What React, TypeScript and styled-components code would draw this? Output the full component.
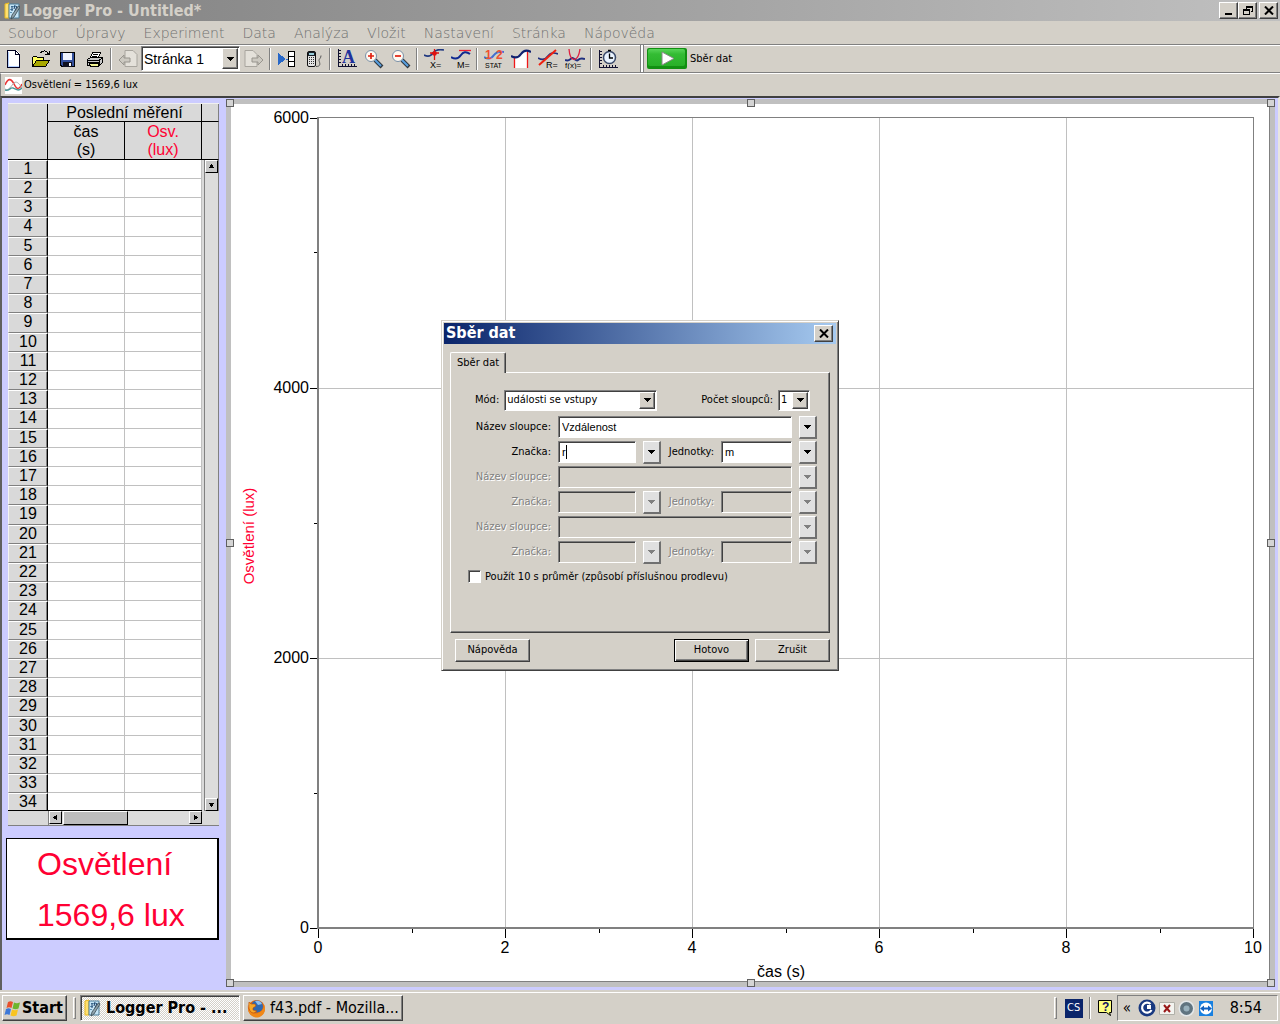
import React from "react";
import styled, { createGlobalStyle, css } from "styled-components";

const face = "#d4d0c8";
const tahoma = '"DejaVu Sans Condensed", "DejaVu Sans", "Noto Sans", sans-serif';
const arial = '"Liberation Sans", Arial, sans-serif';

const GlobalStyle = createGlobalStyle`
  *, *::before, *::after { box-sizing: border-box; }
  body { margin: 0; background: ${face}; font-family: ${tahoma}; color: #000; }
  button, input, select { margin: 0; padding: 0; border-radius: 0; font: inherit; color: inherit; }
`;

const raised = css`
  border: 1px solid;
  border-color: #fff #404040 #404040 #fff;
  box-shadow: inset -1px -1px 0 #808080;
  background: ${face};
`;

const sunken = css`
  border: 1px solid;
  border-color: #808080 #fff #fff #808080;
  box-shadow: inset 1px 1px 0 #404040;
`;

const Page = styled.div`
  display: flex;
  flex-direction: column;
  height: 100vh;
  min-height: 720px;
  overflow: hidden;
`;

const AppWindow = styled.main`
  position: relative;
  display: flex;
  flex: 1;
  flex-direction: column;
  min-height: 0;
`;

/* ---------- title bar, menu, toolbar ---------- */

const TitleBar = styled.header`
  display: flex;
  align-items: center;
  height: 21px;
  padding: 0 2px 0 4px;
  gap: 3px;
  background: linear-gradient(to right, #808080, #c0c0c0);
`;

const WindowTitle = styled.h1`
  flex: 1;
  margin: 0;
  font-size: 16px;
  line-height: 20px;
  font-weight: 700;
  color: ${face};
`;

const CaptionButtons = styled.div`
  display: flex;
  gap: ${(p: { $gap?: number }) => p.$gap ?? 0}px;
`;

const CaptionButton = styled.button`
  ${raised}
  display: grid;
  place-items: center;
  width: 19px;
  height: 17px;
`;

const MenuBar = styled.nav`
  display: flex;
  align-items: center;
  height: 23px;
  padding-left: 8px;
  gap: 18px;
`;

const MenuLink = styled.a`
  font-family: "DejaVu Sans Light", "DejaVu Sans", sans-serif;
  font-size: 14px;
  line-height: 20px;
  font-weight: 200;
  color: #707070;
  text-decoration: none;
`;

const ToolBar = styled.div`
  display: flex;
  align-items: center;
  height: 29px;
  border-top: 1px solid #808080;
  border-bottom: 1px solid #808080;
  box-shadow: inset 0 1px 0 #fff;
`;

const ToolButton = styled.button`
  display: grid;
  place-items: center;
  width: 27px;
  height: 26px;
  border: 0;
  background: none;
`;

const Separator = styled.span`
  width: 2px;
  height: 22px;
  margin: 0 2px;
  border-left: 1px solid #808080;
  border-right: 1px solid #fff;
`;

const BandEnd = styled.span`
  width: 4px;
  height: 27px;
  margin: 0 3px 0 19px;
  border: solid #808080;
  border-width: 0 1px;
  background: #fff;
`;

const CollectButton = styled.button`
  display: flex;
  align-items: center;
  gap: 3px;
  border: 0;
  background: none;
  font-size: 11px;
  line-height: 14px;
`;

const SensorBar = styled.div`
  display: flex;
  align-items: center;
  height: 23px;
  padding-left: 4px;
  gap: 2px;
  border-top: 1px solid #fff;
  border-left: 1px solid #808080;
  font-size: 11px;
  line-height: 14px;
`;

/* ---------- selects ---------- */

const SelectBox = styled.span<{ $wide: number; $tall: number; $arial?: boolean }>`
  ${sunken}
  position: relative;
  display: inline-flex;
  width: ${(p) => p.$wide}px;
  height: ${(p) => p.$tall}px;
  background: #fff;
  font-family: ${(p) => (p.$arial ? arial : tahoma)};
  font-size: ${(p) => (p.$arial ? 14 : 11)}px;

  select {
    appearance: none;
    width: 100%;
    padding-left: 2px;
    border: 0;
    outline: 0;
    background: none;
  }
`;

const SelectArrow = styled.span`
  ${raised}
  position: absolute;
  top: 1px;
  right: 1px;
  bottom: 1px;
  display: grid;
  place-items: center;
  width: 16px;
  pointer-events: none;
`;

const Down = ({ color = "#000" }: { color?: string }) => (
  <svg width="7" height="4" viewBox="0 0 7 4" shapeRendering="crispEdges" aria-hidden="true">
    <path d="M0 0h7v1H6v1H5v1H4v1H3V3H2V2H1V1H0z" fill={color} />
  </svg>
);

function Drop(props: { id?: string; label?: string; value: string; wide: number; tall: number; arial?: boolean }) {
  return (
    <SelectBox $wide={props.wide} $tall={props.tall} $arial={props.arial}>
      <select id={props.id} aria-label={props.label}>
        <option>{props.value}</option>
      </select>
      <SelectArrow>
        <Down />
      </SelectArrow>
    </SelectBox>
  );
}

/* ---------- work area ---------- */

const WorkArea = styled.div`
  display: flex;
  flex: 1;
  min-height: 0;
  padding: 1px 3px 3px 0;
  border: 2px solid;
  border-color: #404040 #e8e6e0 #ccf #404040;
  border-bottom-width: 0;
  border-left-color: #606060;
  background: #ccf;
`;

const Sidebar = styled.section`
  display: flex;
  flex-direction: column;
  flex: none;
  width: 217px;
  margin-right: 7px;
  padding: 4px 0 47px 4px;
  gap: 12px;
`;

const DataGrid = styled.div`
  display: grid;
  grid-template-columns: 194px 17px;
  grid-template-rows: minmax(0, 1fr) 14px;
  flex: 1;
  min-height: 0;
  margin-left: 2px;
  border: solid;
  border-width: 1px 0 1px 0;
  border-color: #f0f0f0 #808080 #808080;
  background: #d9d9d9;
`;

const TableClip = styled.div`
  overflow: hidden;
  border-bottom: 1px solid #000;
`;

const Readings = styled.table`
  width: 194px;
  table-layout: fixed;
  border-collapse: separate;
  border-spacing: 0;
  font-family: ${arial};
  font-size: 16px;
  line-height: 18px;

  th, td { padding: 0; font-weight: 400; text-align: center; }
  tbody tr { height: 19px; }
  tbody tr:nth-child(5n + 4) { height: 20px; }
`;

const HeadCell = styled.th<{ $red?: boolean }>`
  height: ${(p) => (p.colSpan === 2 ? 18 : 38)}px;
  border: solid #000;
  border-width: 0 1px 1px 0;
  background: #d9d9d9;
  color: ${(p) => (p.$red ? "#f03" : "#000")};
  line-height: ${(p) => (p.colSpan === 2 ? 17 : 18)}px;
`;

const CornerCell = styled.th`
  border: solid #000;
  border-width: 0 1px 1px 0;
`;

const RowNumber = styled.th`
  border: 1px solid;
  border-color: #fff #000 #808080 #f4f4f4;
  background: #d9d9d9;
  box-shadow: inset -1px 0 0 #808080;
  line-height: 16px;
  vertical-align: top;
`;

const ValueCell = styled.td`
  border: solid #c0c0c0;
  border-width: 0 1px 1px 0;
  background: #fff;
`;

const SideColumn = styled.div`
  display: flex;
  flex-direction: column;
  min-height: 0;
`;

const SideHead = styled.div`
  height: ${(p: { $tall: number }) => p.$tall}px;
  border: solid #000;
  border-width: 0 0 1px 0;
  border-right: 1px solid #808080;
`;

const ScrollTrack = styled.div<{ $across?: boolean }>`
  display: flex;
  flex: 1;
  flex-direction: ${(p) => (p.$across ? "row" : "column")};
  justify-content: space-between;
  margin-left: ${(p) => (p.$across ? 40 : 2)}px;
  border-left: 1px solid #808080;
  border-right: ${(p) => (p.$across ? 0 : 1)}px solid #808080;
  background: #dcdcdc;
`;

const ScrollButton = styled.button`
  display: grid;
  place-items: center;
  width: 13px;
  height: 13px;
  border: 1px solid;
  border-color: #fff #000 #000 #fff;
  background: #c8c8c8;
`;

const ScrollThumb = styled.div`
  width: 65px;
  margin: 0 auto 0 1px;
  border: 1px solid;
  border-color: #fff #000 #000 #fff;
  background: #bdbdbd;
`;

const Meter = styled.div`
  display: flex;
  flex-direction: column;
  flex: none;
  height: 102px;
  padding-left: 30px;
  border: solid #000;
  border-width: 1px 2px 2px 1px;
  background: #fff;
  font-family: ${arial};
  font-size: 32px;
  line-height: 51px;
  color: #f03;
  white-space: nowrap;
`;

const GraphFrame = styled.section`
  position: relative;
  display: flex;
  flex: 1;
  min-width: 0;
  padding: 5px;
  background: #c0c0c0;
`;

const GraphPaper = styled.svg`
  flex: 1;
  min-width: 0;
  width: 100%;
  height: 100%;
  background: #fff;
  border: solid #808080;
  border-width: 0 1px 1px 0;
  font-family: ${arial};
  font-size: 16px;
`;

const Handle = styled.span<{ $col: number; $row: number }>`
  position: absolute;
  left: calc((100% - 8px) * ${(p) => p.$col} / 2);
  top: calc((100% - 8px) * ${(p) => p.$row} / 2);
  width: 8px;
  height: 8px;
  border: 1px solid #606060;
  background: #d4d4d4;
`;

/* ---------- dialog ---------- */

const DialogLayer = styled.div`
  position: absolute;
  inset: 0;
  display: grid;
  place-items: center;
`;

const Dialog = styled.form`
  width: 398px;
  padding: 2px 2px 8px;
  border: 1px solid;
  border-color: ${face} #404040 #404040 ${face};
  box-shadow: inset 1px 1px 0 #fff, inset -1px -1px 0 #808080;
  background: ${face};
  font-size: 11px;
  line-height: 14px;
`;

const DialogTitle = styled.div`
  display: flex;
  align-items: center;
  height: 21px;
  padding: 0 3px 0 2px;
  background: linear-gradient(to right, #0a246a, #a6caf0);

  h2 {
    flex: 1;
    margin: 0;
    font-size: 16px;
    line-height: 20px;
    color: #fff;
  }
`;

const TabStrip = styled.div`
  display: flex;
  padding: 8px 6px 0;
`;

const Tab = styled.button`
  position: relative;
  height: 21px;
  padding: 0 6px;
  margin-bottom: -1px;
  border: solid;
  border-width: 1px 1px 0 1px;
  border-color: #fff #404040 #fff #fff;
  border-radius: 2px 2px 0 0;
  box-shadow: inset -1px 0 0 #808080;
  background: ${face};
`;

const TabPanel = styled.div`
  display: flex;
  flex-direction: column;
  height: 261px;
  margin: 0 6px;
  padding: 17px 12px 0 17px;
  border: 1px solid;
  border-color: #fff #404040 #404040 #fff;
  box-shadow: inset -1px -1px 0 #808080;
`;

const ModeRow = styled.div`
  display: flex;
  align-items: center;
  justify-content: space-between;
  padding: 0 7px 0 7px;
  margin-bottom: 4px;
`;

const Pair = styled.div`
  display: flex;
  align-items: center;
  gap: 5px;
`;

const FieldRow = styled.div`
  display: grid;
  align-items: center;
  height: 25px;
  grid-template-columns: 83px 78px 18px 46px 71px 18px;
  column-gap: 7px;

  label { justify-self: end; white-space: nowrap; }
`;

const FieldLabel = styled.label<{ $off?: boolean }>`
  color: ${(p) => (p.$off ? "#808080" : "#000")};
  text-shadow: ${(p) => (p.$off ? "1px 1px 0 #fff" : "none")};
`;

const TextField = styled.input<{ $wide?: boolean; $caret?: boolean }>`
  ${sunken}
  grid-column: ${(p) => (p.$wide ? "span 4" : "auto")};
  width: 100%;
  height: 22px;
  padding: 0 3px;
  outline: 0;
  font-family: ${arial};
  font-size: 11px;
  background: #fff;
  ${(p) =>
    p.$caret &&
    css`
      background: linear-gradient(#000, #000) 7px 3px / 1px 14px no-repeat #fff;
    `}

  &:disabled { background: ${face}; }
`;

const ListButton = styled.button`
  display: grid;
  place-items: center;
  width: 18px;
  height: 23px;
  border: solid;
  border-width: 1px 2px 2px 1px;
  border-color: #fff #707070 #707070 #fff;
  background: #e0e0e0;
`;

const CheckRow = styled.label`
  display: flex;
  align-items: center;
  gap: 4px;
  margin-top: 5px;

  input {
    ${sunken}
    appearance: none;
    width: 13px;
    height: 13px;
    background: #fff;
  }
`;

const DialogButtons = styled.div`
  display: flex;
  gap: 6px;
  padding: 6px 6px 0 11px;
`;

const PushButton = styled.button<{ $main?: boolean; $left?: boolean }>`
  ${raised}
  width: 75px;
  height: 23px;
  margin-right: ${(p) => (p.$left ? "auto" : "0")};
  ${(p) =>
    p.$main &&
    css`
      border-color: #000;
      box-shadow: inset 1px 1px 0 #fff, inset -1px -1px 0 #404040, inset -2px -2px 0 #808080;
    `}
`;

/* ---------- task bar ---------- */

const TaskBar = styled.footer`
  display: flex;
  align-items: center;
  flex: none;
  height: 34px;
  padding: 4px 2px 2px;
  gap: 3px;
  background: ${face};
  box-shadow: inset 0 2px 0 ${face}, inset 0 3px 0 #fff;
`;

const StartButton = styled.button`
  ${raised}
  display: flex;
  align-items: center;
  width: 65px;
  height: 26px;
  padding-left: 1px;
  gap: 1px;
  font-size: 16px;
  line-height: 20px;
  font-weight: 700;
`;

const TaskButton = styled.button<{ $active?: boolean }>`
  ${(p) => (p.$active ? sunken : raised)}
  display: flex;
  align-items: center;
  width: 160px;
  height: 26px;
  padding-left: 3px;
  gap: 4px;
  background: ${(p) => (p.$active ? "repeating-conic-gradient(#fff 0 25%, #d4d0c8 0 50%) 0 0 / 2px 2px" : face)};
  font-size: 16px;
  line-height: 20px;
  font-weight: ${(p) => (p.$active ? 700 : 400)};
  white-space: nowrap;
`;

const Grip = styled.span`
  width: 3px;
  height: 22px;
  margin: 0 1px 0 3px;
  border: 1px solid;
  border-color: #fff #808080 #808080 #fff;
`;

const TrayStart = styled.div`
  display: flex;
  align-items: center;
  margin-left: auto;
  gap: 4px;
`;

const Language = styled.span`
  display: grid;
  place-items: center;
  width: 18px;
  height: 19px;
  margin-left: 3px;
  background: #0a246a;
  color: #fff;
  font-size: 11px;
  line-height: 14px;
`;

const Tray = styled.div`
  display: flex;
  align-items: center;
  height: 26px;
  padding: 0 15px 0 5px;
  gap: 3px;
  border: 1px solid;
  border-color: #808080 #fff #fff #808080;
`;

const Clock = styled.time`
  margin-left: 13px;
  font-size: 16px;
  line-height: 20px;
`;

const Chevrons = styled.span`
  width: 12px;
  font-size: 15px;
  line-height: 18px;
`;

/* ---------- icons ---------- */

const Icon = ({ children, w = 20, h = 20, crisp }: { children: React.ReactNode; w?: number; h?: number; crisp?: boolean }) => (
  <svg width={w} height={h} viewBox={`0 0 ${w} ${h}`} fill="none" shapeRendering={crisp ? "crispEdges" : "auto"} aria-hidden="true">
    {children}
  </svg>
);

const LoggerIcon = ({ w = 16 }: { w?: number }) => (
  <Icon w={w} h={18}>
    <path d="M1 2l4-1v15H1z" fill="#ffe070" stroke="#e8b820" />
    <path d="M5 2h10v14H5z" fill="#c4e4f6" stroke="#4c7c98" />
    <path d="M7 4.500h6M6 7.500h3M6 10.500h2" stroke="#5d93b5" />
    <path d="M8 4v5M11 3l-1 4M13 4l-2 5" stroke="#1d3f66" />
    <path d="M14.500 4L8 13l-1 4 3-2 6-10z" fill="#90a4ae" stroke="#37474f" strokeWidth=".8" />
  </Icon>
);

const NewIcon = () => (
  <Icon crisp>
    <path d="M4 1h8l4 4v14H3V1z" fill="#fff" />
    <path d="M3.500 1.500h8l4 4v13h-12z" stroke="#000020" />
    <path d="M11.500 1.500v4h4" stroke="#000020" />
    <path d="M4.500 2.500v15M4 17.500h11" stroke="#b4d0ff" />
  </Icon>
);

const OpenIcon = () => (
  <Icon crisp>
    <path d="M1.500 18V8.500l1-1h3l1 1h6V12" fill="#ffff60" stroke="#000" />
    <path d="M1.500 17.500l4-6h13l-4 6z" fill="#a8a800" stroke="#000" />
    <path d="M9.500 4c2-3 6-3 8 1M18.500 2v4M14 5.500h5" stroke="#000" />
  </Icon>
);

const SaveIcon = () => (
  <Icon crisp>
    <path d="M2.500 3.500h14v14H4L2.500 16z" fill="#34509c" stroke="#000" />
    <path d="M5 4h9v7H5z" fill="#f0f4ff" />
    <path d="M5 13h9v5H5z" fill="#101020" />
    <path d="M11 14h2v3h-2z" fill="#fff" />
  </Icon>
);

const PrintIcon = () => (
  <Icon crisp>
    <path d="M7.500 3.500h8l-2 5h-8z" fill="#fff" stroke="#000" />
    <path d="M8 5.500h5M7 7.500h5" stroke="#000" />
    <path d="M2.500 10.500l3-2h12v5l-3 3h-12z" fill="#c8c8c8" stroke="#000" />
    <path d="M2 11.500h12M3 13.500h11M14.500 16v-5l3-2" stroke="#000" />
    <path d="M4.500 14.500h9v3h-8z" fill="#f0f090" stroke="#000" />
  </Icon>
);

const PageArrow = ({ next }: { next?: boolean }) => (
  <Icon>
    <path d="M7 1.500h8l4 4v12H7z" fill="#e4e1da" stroke="#a8a59e" transform={next ? "translate(-6 0)" : undefined} />
    <path
      d="M1 11l5-5v3h6v4H6v3z"
      fill="#ccc9c1"
      stroke="#98958e"
      transform={next ? "matrix(-1 0 0 1 20 0)" : undefined}
    />
  </Icon>
);

const ColumnsIcon = () => (
  <Icon crisp>
    <path d="M1 4v12l8-6z" fill="#2868c8" />
    <path d="M11.500 2.500h6v15h-6zM11.500 7.500h6M11.500 12.500h6" fill="#fff" stroke="#000" />
    <path d="M9 10h2" stroke="#2868c8" />
  </Icon>
);

const CalcIcon = () => (
  <Icon>
    <rect x="3.500" y="2.500" width="8" height="15" rx="1.500" fill="#e4e4e4" stroke="#111" />
    <path d="M4 3h7v4H4z" fill="#1a2028" />
    <path d="M5 4h5v2H5z" fill="#98ccd8" />
    <path d="M5.500 8v8M7.500 8v8M9.500 8v8" stroke="#333" strokeDasharray="1 1" />
    <path d="M12 17.500c5 0 4-3 3-6 0-2 2-2 2-5" stroke="#555" />
  </Icon>
);

const Ruler = () => (
  <>
    <path d="M1.500 1v18M1 18.500h19" stroke="#101030" />
    <path d="M2 2.500h2M2 5.500h2M2 8.500h2M2 11.500h2M2 14.500h2M5.500 16v2M8.500 16v2M11.500 16v2M14.500 16v2M17.500 16v2" stroke="#101030" />
  </>
);

const AutoscaleIcon = () => (
  <Icon h={22}>
    <Ruler />
    <text x="5" y="15" fontFamily="Liberation Serif, serif" fontSize="18" fontWeight="700" fill="#20309c">A</text>
  </Icon>
);

const ZoomIcon = ({ plus }: { plus?: boolean }) => (
  <Icon>
    <path d="M11 11l7 7" stroke="#303840" strokeWidth="4" />
    <path d="M11 11l6 6" stroke="#58a0e0" strokeWidth="2" />
    <circle cx="7" cy="7" r="5.500" fill="#fff8f0" stroke="#7890a8" />
    <path d={plus ? "M4 7h6M7 4v6" : "M4 7h6"} stroke="#e02010" strokeWidth="1.700" />
  </Icon>
);

const tiny = { fontFamily: "Liberation Sans, sans-serif", fontSize: 9, fill: "#000" };

const ExamineIcon = () => (
  <Icon>
    <path d="M0 6c4 2 7 1 9-2s6-4 11-3" stroke="#203880" strokeWidth="1.600" />
    <path d="M10.500 0v11M6 4h9" stroke="#e01010" strokeWidth="1.300" />
    <circle cx="10.500" cy="4.500" r="2.300" fill="#e01010" />
    <text x="6" y="19" {...tiny}>X=</text>
  </Icon>
);

const TangentIcon = () => (
  <Icon>
    <path d="M8 1.500h12" stroke="#f02030" strokeWidth="1.300" />
    <path d="M0 8c5 3 8 1 10-2s5-4 9-1" stroke="#102890" strokeWidth="2" />
    <text x="6" y="19" {...tiny}>M=</text>
  </Icon>
);

const StatIcon = () => (
  <Icon>
    <path d="M0 8c5 3 8 1 10-2s5-4 10-3" stroke="#4070d0" strokeWidth="2" />
    <text x="1" y="10" fontFamily="Liberation Sans, sans-serif" fontSize="12" fontWeight="700" fill="#f05030">1</text>
    <text x="12" y="10" fontFamily="Liberation Sans, sans-serif" fontSize="12" fontWeight="700" fill="#f05030">2</text>
    <text x="1" y="19" fontFamily="Liberation Sans, sans-serif" fontSize="7" fill="#000">STAT</text>
  </Icon>
);

const IntegralIcon = () => (
  <Icon>
    <path d="M4 8c4 0 7-6 12-6v17H4z" fill="#fff" />
    <path d="M3.500 8v11M16.500 2v17" stroke="#f01818" strokeWidth="1.300" />
    <path d="M0 7c5 3 8 1 10-2s5-5 10-2" stroke="#102070" strokeWidth="2.200" />
  </Icon>
);

const LinearIcon = () => (
  <Icon>
    <path d="M0 9c5 3 8 1 10-2s5-4 10-2" stroke="#203080" strokeWidth="1.700" />
    <path d="M1 16L18 1" stroke="#f02010" strokeWidth="2" />
    <text x="8" y="19" {...tiny}>R=</text>
  </Icon>
);

const CurveIcon = () => (
  <Icon>
    <path d="M0 11c4 2 5-1 7-2s4 4 6 2 4-2 7-1" stroke="#203080" strokeWidth="2" />
    <path d="M4 0c1 14 9 14 11 0" stroke="#e02040" strokeWidth="1.300" />
    <text x="0" y="19" {...tiny} fontSize="8">f(x)=</text>
  </Icon>
);

const TimerIcon = () => (
  <Icon>
    <Ruler />
    <circle cx="11.500" cy="8.500" r="6" fill="#eaf4ff" stroke="#384868" strokeWidth="1.500" />
    <path d="M11.500 4.500v4.500h3.500M10 1.500h3" stroke="#000" strokeWidth="1.300" />
  </Icon>
);

const CollectIcon = () => (
  <Icon w={40} h={21}>
    <defs>
      <linearGradient id="go" x2="0" y2="1">
        <stop stopColor="#58d458" />
        <stop offset=".3" stopColor="#34bc34" />
        <stop offset="1" stopColor="#28b028" />
      </linearGradient>
    </defs>
    <rect width="40" height="21" rx="2" fill="#129012" />
    <rect x="1" y="1" width="37" height="17" rx="2" fill="url(#go)" />
    <path d="M15 4v13l12-6.500z" fill="#fff" stroke="#888" />
  </Icon>
);

const SensorIcon = () => (
  <Icon w={17} h={17}>
    <path d="M0 0h17v17H0z" fill="#fff" />
    <path d="M0 8c3-7 6-7 9-1s5 6 8 0" stroke="#e83838" strokeWidth="1.600" />
    <path d="M0 12c3 2 5-1 8-5s6-1 9 4" stroke="#a8a8a8" />
    <path d="M0 13c4 2 5-3 8-2s5 4 9 0" stroke="#489898" strokeWidth="1.400" />
  </Icon>
);

const Cross = () => (
  <Icon w={10} h={9}>
    <path d="M1 .5l8 8M9 .5l-8 8" stroke="#000" strokeWidth="2" />
  </Icon>
);

const Arrow = ({ turn }: { turn: number }) => (
  <Icon w={7} h={7} crisp>
    <path d="M3 1h1v1h1v2h1v1H1V4h1V2h1z" fill="#000" transform={`rotate(${turn} 3.500 3.500)`} />
  </Icon>
);

const WindowsLogo = () => (
  <Icon w={17} h={17}>
    <path d="M4 2c2-1 3-1 5 0L7.500 8c-2-1-3-1-5 0z" fill="#e8502c" />
    <path d="M10 2.500c2 1 3 1 6 0l-1.500 6c-2 1-4 1-6 0z" fill="#6cb52c" />
    <path d="M2 9c2-1 3-1 5 0l-1.500 6c-2-1-3-1-5 0z" fill="#3c78d8" />
    <path d="M8 9.500c2 1 4 1 6 0l-1.500 6c-2 1-4 1-6 0z" fill="#f8c420" />
  </Icon>
);

const FirefoxIcon = () => (
  <Icon w={19} h={19}>
    <circle cx="9.500" cy="9.500" r="8.500" fill="#e06810" />
    <circle cx="10" cy="7.500" r="6" fill="#3068b0" />
    <path d="M8 2c3-1 6 0 7 3l-4 1z" fill="#90c0f0" />
    <path d="M1 6c0 3 0 4 2 6 3 4 10 3 13-2 1-2 1-4 0-6 4 5 2 13-5 14.500C4 19 0 13 1 6z" fill="#f08818" />
    <path d="M2 3l2 2h4l1 2-3 2v2l4 1-3 2c-4 0-6-4-5-11z" fill="#f8a828" stroke="#b84808" strokeWidth=".6" />
  </Icon>
);

/* ---------- graph ---------- */

const yTicks = [
  { at: 14, text: "6000" },
  { at: 284, text: "4000" },
  { at: 554, text: "2000" },
  { at: 824, text: "0" },
];
const xTicks = [0, 2, 4, 6, 8, 10].map((n) => ({ at: 87 + n * 93.5, text: String(n) }));

function Graph() {
  return (
    <GraphPaper viewBox="0 0 1038 877" preserveAspectRatio="none" role="img" aria-label="Osvětlení (lux) / čas (s)">
      <g stroke="#c0c0c0" shapeRendering="crispEdges">
        {xTicks.slice(1, 5).map((t) => (
          <line key={t.text} x1={t.at + 0.5} x2={t.at + 0.5} y1={14} y2={824} />
        ))}
        {yTicks.slice(1, 3).map((t) => (
          <line key={t.text} x1={87} x2={1022} y1={t.at + 0.5} y2={t.at + 0.5} />
        ))}
      </g>
      <g stroke="#808080" shapeRendering="crispEdges">
        <path d="M87 13.500h935.500V824" fill="none" />
        <path d="M87 13v811h936" fill="none" strokeWidth="2" />
      </g>
      <g stroke="#000" shapeRendering="crispEdges">
        {yTicks.map((t) => (
          <line key={t.text} x1={79} x2={86} y1={t.at + 0.5} y2={t.at + 0.5} />
        ))}
        {[148.5, 419.5, 689.5].map((y) => (
          <line key={y} x1={83} x2={86} y1={y} y2={y} />
        ))}
        {xTicks.map((t) => (
          <line key={t.text} x1={t.at + 0.5} x2={t.at + 0.5} y1={825} y2={834} />
        ))}
        {xTicks.slice(0, 5).map((t) => (
          <line key={t.text} x1={t.at + 94} x2={t.at + 94} y1={825} y2={829} />
        ))}
      </g>
      {yTicks.map((t) => (
        <text key={t.text} x={78} y={t.at + 5} textAnchor="end">{t.text}</text>
      ))}
      {xTicks.map((t) => (
        <text key={t.text} x={t.at} y={849} textAnchor="middle">{t.text}</text>
      ))}
      <text x={550} y={873} textAnchor="middle">čas (s)</text>
      <text transform="translate(23 432) rotate(-90)" textAnchor="middle" fill="#f03" fontSize="15">Osvětlení (lux)</text>
    </GraphPaper>
  );
}

const handles = [[0, 0], [1, 0], [2, 0], [0, 1], [2, 1], [0, 2], [1, 2], [2, 2]];
const menus = ["Soubor", "Úpravy", "Experiment", "Data", "Analýza", "Vložit", "Nastavení", "Stránka", "Nápověda"];

function ColumnFields({ n, name = "", mark = "", unit = "", off }: { n: number; name?: string; mark?: string; unit?: string; off?: boolean }) {
  const arrow = <Down color={off ? "#808080" : "#000"} />;
  return (
    <>
      <FieldRow>
        <FieldLabel $off={off} htmlFor={`name${n}`}>Název sloupce:</FieldLabel>
        <TextField $wide id={`name${n}`} defaultValue={name} disabled={off} />
        <ListButton type="button" aria-label="Název sloupce" disabled={off}>{arrow}</ListButton>
      </FieldRow>
      <FieldRow>
        <FieldLabel $off={off} htmlFor={`mark${n}`}>Značka:</FieldLabel>
        <TextField id={`mark${n}`} defaultValue={mark} disabled={off} $caret={!off} />
        <ListButton type="button" aria-label="Značka" disabled={off}>{arrow}</ListButton>
        <FieldLabel $off={off} htmlFor={`unit${n}`}>Jednotky:</FieldLabel>
        <TextField id={`unit${n}`} defaultValue={unit} disabled={off} />
        <ListButton type="button" aria-label="Jednotky" disabled={off}>{arrow}</ListButton>
      </FieldRow>
    </>
  );
}

export default function App() {
  return (
    <Page>
      <GlobalStyle />
      <AppWindow>
        <TitleBar>
          <LoggerIcon />
          <WindowTitle>Logger Pro - Untitled*</WindowTitle>
          <CaptionButtons $gap={2}>
            <CaptionButtons>
              <CaptionButton aria-label="Minimalizovat">
                <Icon w={10} h={9} crisp><path d="M1 7h7v2H1z" fill="#000" /></Icon>
              </CaptionButton>
              <CaptionButton aria-label="Obnovit">
                <Icon w={10} h={9} crisp>
                  <path d="M3 0h7v6H8V5h1V2H4v1H3zM0 3h7v6H0zm1 2v3h5V5z" fill="#000" fillRule="evenodd" />
                </Icon>
              </CaptionButton>
            </CaptionButtons>
            <CaptionButton aria-label="Zavřít"><Cross /></CaptionButton>
          </CaptionButtons>
        </TitleBar>

        <MenuBar>
          {menus.map((m) => (
            <MenuLink key={m} href="#">{m}</MenuLink>
          ))}
        </MenuBar>

        <ToolBar>
          <ToolButton aria-label="Nový"><NewIcon /></ToolButton>
          <ToolButton aria-label="Otevřít"><OpenIcon /></ToolButton>
          <ToolButton aria-label="Uložit"><SaveIcon /></ToolButton>
          <ToolButton aria-label="Tisk"><PrintIcon /></ToolButton>
          <Separator />
          <ToolButton aria-label="Předchozí stránka"><PageArrow /></ToolButton>
          <Drop label="Stránka" value="Stránka 1" wide={99} tall={25} arial />
          <ToolButton aria-label="Další stránka"><PageArrow next /></ToolButton>
          <Separator />
          <ToolButton aria-label="Tabulka"><ColumnsIcon /></ToolButton>
          <ToolButton aria-label="Přístroj"><CalcIcon /></ToolButton>
          <Separator />
          <ToolButton aria-label="Automatické měřítko"><AutoscaleIcon /></ToolButton>
          <ToolButton aria-label="Zvětšit"><ZoomIcon plus /></ToolButton>
          <ToolButton aria-label="Zmenšit"><ZoomIcon /></ToolButton>
          <Separator />
          <ToolButton aria-label="Odečet"><ExamineIcon /></ToolButton>
          <ToolButton aria-label="Tečna"><TangentIcon /></ToolButton>
          <Separator />
          <ToolButton aria-label="Statistika"><StatIcon /></ToolButton>
          <ToolButton aria-label="Integrál"><IntegralIcon /></ToolButton>
          <ToolButton aria-label="Lineární proložení"><LinearIcon /></ToolButton>
          <ToolButton aria-label="Proložení křivky"><CurveIcon /></ToolButton>
          <Separator />
          <ToolButton aria-label="Nastavení sběru"><TimerIcon /></ToolButton>
          <BandEnd />
          <CollectButton><CollectIcon />Sběr dat</CollectButton>
        </ToolBar>

        <SensorBar><SensorIcon />Osvětlení = 1569,6 lux</SensorBar>

        <WorkArea>
          <Sidebar>
            <DataGrid>
              <TableClip>
                <Readings>
                  <colgroup>
                    <col width="40" />
                    <col width="77" />
                    <col width="77" />
                  </colgroup>
                  <thead>
                    <tr>
                      <CornerCell rowSpan={2} />
                      <HeadCell colSpan={2}>Poslední měření</HeadCell>
                    </tr>
                    <tr>
                      <HeadCell>čas<br />(s)</HeadCell>
                      <HeadCell $red>Osv.<br />(lux)</HeadCell>
                    </tr>
                  </thead>
                  <tbody>
                    {Array.from({ length: 34 }, (_, i) => (
                      <tr key={i}>
                        <RowNumber scope="row">{i + 1}</RowNumber>
                        <ValueCell />
                        <ValueCell />
                      </tr>
                    ))}
                  </tbody>
                </Readings>
              </TableClip>
              <SideColumn>
                <SideHead $tall={18} />
                <SideHead $tall={38} />
                <ScrollTrack>
                  <ScrollButton aria-label="Nahoru"><Arrow turn={0} /></ScrollButton>
                  <ScrollButton aria-label="Dolů"><Arrow turn={180} /></ScrollButton>
                </ScrollTrack>
              </SideColumn>
              <ScrollTrack $across>
                <ScrollButton aria-label="Vlevo"><Arrow turn={270} /></ScrollButton>
                <ScrollThumb />
                <ScrollButton aria-label="Vpravo"><Arrow turn={90} /></ScrollButton>
              </ScrollTrack>
            </DataGrid>
            <Meter>
              <span>Osvětlení</span>
              <span>1569,6 lux</span>
            </Meter>
          </Sidebar>

          <GraphFrame>
            <Graph />
            {handles.map(([col, row]) => (
              <Handle key={`${col}${row}`} $col={col} $row={row} />
            ))}
          </GraphFrame>
        </WorkArea>

        <DialogLayer>
          <Dialog role="dialog" aria-labelledby="dialog-title" onSubmit={(e) => e.preventDefault()}>
            <DialogTitle>
              <h2 id="dialog-title">Sběr dat</h2>
              <CaptionButton type="button" aria-label="Zavřít okno"><Cross /></CaptionButton>
            </DialogTitle>
            <TabStrip role="tablist">
              <Tab type="button" role="tab" aria-selected="true">Sběr dat</Tab>
            </TabStrip>
            <TabPanel role="tabpanel">
              <ModeRow>
                <Pair>
                  <label htmlFor="mode">Mód:</label>
                  <Drop id="mode" value="události se vstupy" wide={153} tall={21} />
                </Pair>
                <Pair>
                  <label htmlFor="count">Počet sloupců:</label>
                  <Drop id="count" value="1" wide={32} tall={21} />
                </Pair>
              </ModeRow>
              <ColumnFields n={1} name="Vzdálenost" mark="r" unit="m" />
              <ColumnFields n={2} off />
              <ColumnFields n={3} off />
              <CheckRow>
                <input type="checkbox" />
                Použít 10 s průměr (způsobí příslušnou prodlevu)
              </CheckRow>
            </TabPanel>
            <DialogButtons>
              <PushButton type="button" $left>Nápověda</PushButton>
              <PushButton type="submit" $main>Hotovo</PushButton>
              <PushButton type="button">Zrušit</PushButton>
            </DialogButtons>
          </Dialog>
        </DialogLayer>
      </AppWindow>

      <TaskBar>
        <StartButton><WindowsLogo />Start</StartButton>
        <Grip />
        <TaskButton $active><LoggerIcon w={18} />Logger Pro - ...</TaskButton>
        <TaskButton><FirefoxIcon />f43.pdf - Mozilla...</TaskButton>
        <TrayStart>
          <Grip />
          <Language>CS</Language>
          <Separator />
          <Icon w={16} h={18}>
            <path d="M1.500 1.500h13v12h-2l1 3-4-3h-8z" fill="#ffff80" stroke="#000" />
            <text x="5" y="12" fontFamily="Liberation Sans, sans-serif" fontSize="12" fontWeight="700" fill="#101060">?</text>
          </Icon>
          <Tray>
            <Chevrons>«</Chevrons>
            <Icon w={18} h={18}>
              <circle cx="9" cy="9" r="8.500" fill="#183880" />
              <path d="M12.500 5a5 5 0 1 0 1 6" stroke="#fff" strokeWidth="2.200" />
              <path d="M9 6h4v4H9z" fill="#fff" />
            </Icon>
            <Icon w={16} h={16}>
              <path d="M.5 2.500h15v12H.5z" fill="#f4f4f0" stroke="#b0b0a8" />
              <path d="M5 5l6 7M11 5l-6 7" stroke="#981818" strokeWidth="2" />
            </Icon>
            <Icon w={17} h={17}>
              <circle cx="8.500" cy="8.500" r="8" fill="#e4e8ea" />
              <circle cx="8.500" cy="8.500" r="6.500" fill="#607480" />
              <circle cx="8.500" cy="8.500" r="3" fill="#98b0bc" />
            </Icon>
            <Icon w={16} h={17}>
              <path d="M1 1h14v15H1z" fill="#1880e0" />
              <circle cx="8" cy="8.500" r="6" fill="#fff" />
              <path d="M2 8.500l4-3v2h4v-2l4 3-4 3v-2H6v2z" fill="#1060c0" />
            </Icon>
            <Clock>8:54</Clock>
          </Tray>
        </TrayStart>
      </TaskBar>
    </Page>
  );
}
